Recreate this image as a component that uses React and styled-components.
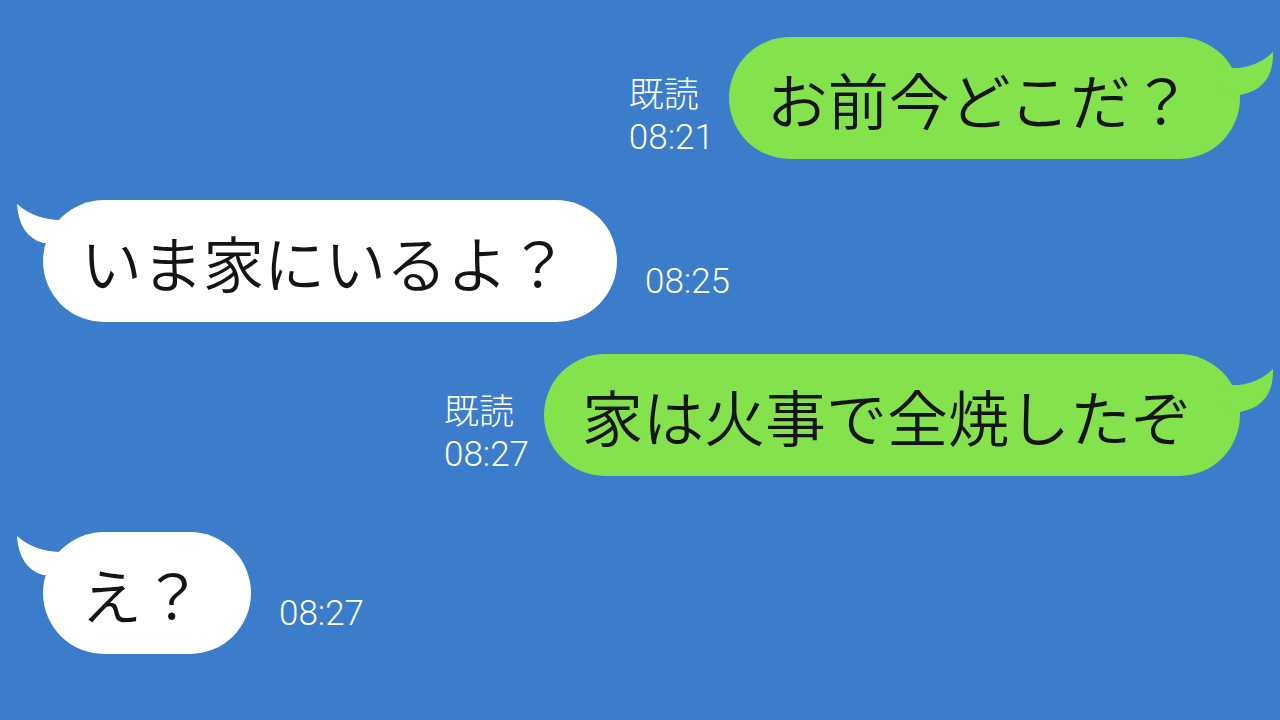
import React from "react";
import styled, { createGlobalStyle } from "styled-components";

const GlobalStyle = createGlobalStyle`
  html, body {
    margin: 0;
    padding: 0;
    background: #3b7ccb;
  }
`;

const messages = [
  { id: 1, mine: true, text: "お前今どこだ？", time: "08:21", gap: 0 },
  { id: 2, mine: false, text: "いま家にいるよ？", time: "08:25", gap: 41 },
  { id: 3, mine: true, text: "家は火事で全焼したぞ", time: "08:27", gap: 32 },
  { id: 4, mine: false, text: "え？", time: "08:27", gap: 56 },
];

function Tail({ mine }) {
  if (mine) {
    return (
      <SentTail viewBox="0 0 60 60" width="60" height="60">
        <path d="M10,21 Q35,22 53,5 Q54,42 20,48 L0,40 L0,24 Z" fill="#84e24c" />
      </SentTail>
    );
  }
  return (
    <ReceivedTail viewBox="0 0 60 60" width="60" height="60">
      <path d="M49,20 Q22,20 4,4 Q6,36 30,43 L60,43 L60,20 Z" fill="#ffffff" />
    </ReceivedTail>
  );
}

export default function App() {
  return (
    <>
      <GlobalStyle />
      <Screen>
        {messages.map((m) => (
          <Row key={m.id} mine={m.mine} gap={m.gap}>
            {m.mine ? (
              <>
                <SentMeta>
                  <span>既読</span>
                  <span>{m.time}</span>
                </SentMeta>
                <Bubble mine>
                  {m.text}
                  <Tail mine />
                </Bubble>
              </>
            ) : (
              <>
                <Bubble>
                  {m.text}
                  <Tail />
                </Bubble>
                <Time>{m.time}</Time>
              </>
            )}
          </Row>
        ))}
      </Screen>
    </>
  );
}

const Screen = styled.div`
  width: 1280px;
  height: 720px;
  box-sizing: border-box;
  padding: 37px 40px 0 43px;
  display: flex;
  flex-direction: column;
  overflow: hidden;
  background: #3b7ccb;
  font-family: "Noto Sans CJK JP", "Noto Sans", sans-serif;
`;

const Row = styled.div.withConfig({ shouldForwardProp: (p) => p !== "mine" && p !== "gap" })`
  display: flex;
  align-items: flex-end;
  justify-content: ${(p) => (p.mine ? "flex-end" : "flex-start")};
  margin-top: ${(p) => p.gap}px;
`;

const Bubble = styled.div.withConfig({ shouldForwardProp: (p) => p !== "mine" })`
  position: relative;
  display: flex;
  align-items: center;
  height: 122px;
  box-sizing: border-box;
  padding: 0 48px 0 38px;
  border-radius: 61px;
  background: ${(p) => (p.mine ? "#84e24c" : "#ffffff")};
  color: #141414;
  font-size: 61px;
  font-weight: 350;
  white-space: nowrap;
`;

const SentTail = styled.svg`
  position: absolute;
  left: calc(100% - 20px);
  top: 10px;
  overflow: visible;
`;

const ReceivedTail = styled.svg`
  position: absolute;
  left: -30px;
  top: 0;
  overflow: visible;
`;

const MetaText = styled.div`
  color: #ffffff;
  font-family: "Roboto", "Noto Sans CJK JP", sans-serif;
  font-size: 35px;
  font-weight: 300;
  line-height: 42px;
`;

const SentMeta = styled(MetaText)`
  display: flex;
  flex-direction: column;
  margin: 0 15px 0 0;
`;

const Time = styled(MetaText)`
  margin: 0 0 19px 28px;
`;
